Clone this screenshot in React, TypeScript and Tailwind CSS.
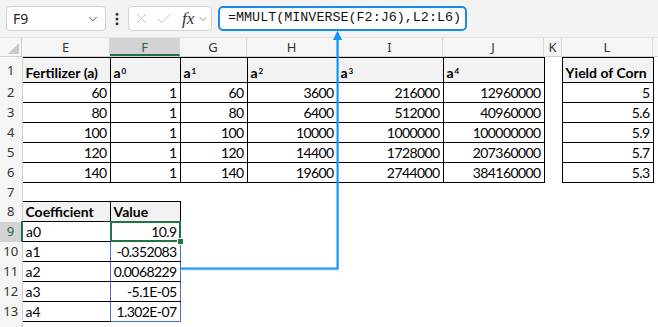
import React from "react";
import { ChevronDown, X, Check, EllipsisVertical } from "lucide-react";

const COLS = [
  { k: "E", w: 88 },
  { k: "F", w: 70 },
  { k: "G", w: 67 },
  { k: "H", w: 90 },
  { k: "I", w: 106 },
  { k: "J", w: 101 },
  { k: "K", w: 18 },
  { k: "L", w: 91 },
  { k: "", w: 80 },
];

const powers = [
  [60, 1, 60, 3600, 216000, 12960000, 5],
  [80, 1, 80, 6400, 512000, 40960000, 5.6],
  [100, 1, 100, 10000, 1000000, 100000000, 5.9],
  [120, 1, 120, 14400, 1728000, 207360000, 5.7],
  [140, 1, 140, 19600, 2744000, 384160000, 5.3],
];

const coeffs = [
  ["a0", "10.9"],
  ["a1", "-0.352083"],
  ["a2", "0.0068229"],
  ["a3", "-5.1E-05"],
  ["a4", "1.302E-07"],
];

const cellFont = { fontFamily: "Lato, 'Open Sans', sans-serif" };

function RowHead({ n, active }: { n?: number; active?: boolean }) {
  return (
    <td
      className={`p-0 text-center align-middle text-[13px] leading-none ${
        active
          ? "bg-[#d3d3d3] text-[#1e6b3f] border-r-2 border-r-[#217346]"
          : "bg-[#f5f5f5] text-[#333] border-r border-r-[#cfcfcf]"
      }`}
      style={{ fontFamily: "'Noto Sans', sans-serif" }}
    >
      {n}
    </td>
  );
}

function Cell({
  children,
  b,
  head,
  right,
  className = "",
}: {
  children?: React.ReactNode;
  b?: boolean;
  head?: boolean;
  right?: boolean;
  className?: string;
}) {
  return (
    <td
      className={`p-0 px-[3px] align-bottom pb-[1px] text-[14px] leading-[17px] text-black whitespace-nowrap overflow-hidden ${
        b ? "border border-black" : ""
      } ${head ? "bg-[#f2f2f2] font-bold" : ""} ${right ? "text-right tracking-[-0.6px]" : "text-left"} ${className}`}
      style={cellFont}
    >
      {children}
    </td>
  );
}

function Pow({ n }: { n: number }) {
  return (
    <>
      a<sup className="text-[8px] relative -top-[4px] ml-[1px] font-bold">{n}</sup>
    </>
  );
}

export default function App() {
  const total = 22 + COLS.reduce((s, c) => s + c.w, 0);
  return (
    <div className="relative w-[658px] h-[327px] overflow-hidden bg-white select-none">
      {/* formula bar */}
      <div className="h-[38px] bg-[#f3f3f3] border-b border-[#e2e2e2] flex items-start pt-[6px] pl-[6px]">
        <div className="w-[100px] h-[25px] bg-white border border-[#d4d4d4] rounded-[4px] flex items-center justify-between pl-[6px] pr-[5px]">
          <span className="text-[14px] text-[#222]" style={{ fontFamily: "'Noto Sans', sans-serif" }}>
            F9
          </span>
          <ChevronDown size={14} strokeWidth={1.5} className="text-[#444]" />
        </div>
        <div className="w-[22px] h-[25px] flex items-center justify-center">
          <EllipsisVertical size={16} strokeWidth={2.5} className="text-[#333]" />
        </div>
        <div className="w-[84px] h-[25px] bg-white border border-[#d4d4d4] rounded-[4px] flex items-center pl-[4px]">
          <X size={17} strokeWidth={1.1} className="text-[#b4b4b4]" />
          <Check size={18} strokeWidth={1.1} className="text-[#b4b4b4] ml-[5px]" />
          <span
            className="ml-[9px] text-[17px] italic text-[#333] leading-none"
            style={{ fontFamily: "'Liberation Serif', serif" }}
          >
            fx
          </span>
          <ChevronDown size={12} strokeWidth={1.5} className="text-[#777] ml-[3px]" />
        </div>
        <div className="ml-[6px] w-[249px] h-[25px] bg-white border-2 border-[#1a8ae6] rounded-[5px] flex items-center pl-[8px]">
          <span className="text-[13.4px] text-[#111]" style={{ fontFamily: "'Liberation Mono', monospace" }}>
            =MMULT(MINVERSE(F2:J6),L2:L6)
          </span>
        </div>
      </div>

      {/* column headers */}
      <div className="flex h-[19px] bg-[#f5f5f5] border-b border-[#cfcfcf]">
        <div className="w-[22px] shrink-0 relative border-r border-[#cfcfcf]">
          <div className="absolute right-[2px] bottom-[2px] w-0 h-0 border-l-[11px] border-l-transparent border-b-[11px] border-b-[#c8c8c8]" />
        </div>
        {COLS.map((c, i) => (
          <div
            key={i}
            style={{ width: c.w, fontFamily: "'Noto Sans', sans-serif" }}
            className={`shrink-0 text-center text-[13px] leading-[18px] border-r border-[#d8d8d8] ${
              c.k === "F" ? "bg-[#d3d3d3] text-[#1e6b3f] border-b-2 border-b-[#217346]" : "text-[#333]"
            }`}
          >
            {c.k}
          </div>
        ))}
      </div>

      {/* grid */}
      <table className="table-fixed border-collapse" style={{ width: total }}>
        <colgroup>
          <col style={{ width: 22 }} />
          {COLS.map((c, i) => (
            <col key={i} style={{ width: c.w }} />
          ))}
        </colgroup>
        <tbody>
          <tr className="h-[25px]">
            <RowHead n={1} />
            <Cell b head>Fertilizer (a)</Cell>
            {[0, 1, 2, 3, 4].map((n) => (
              <Cell key={n} b head>
                <Pow n={n} />
              </Cell>
            ))}
            <Cell />
            <Cell b head>Yield of Corn</Cell>
            <Cell />
          </tr>
          {powers.map((r, i) => (
            <tr key={i} className="h-[20px]">
              <RowHead n={i + 2} />
              {r.slice(0, 6).map((v, j) => (
                <Cell key={j} b right>
                  {v}
                </Cell>
              ))}
              <Cell />
              <Cell b right>
                {r[6]}
              </Cell>
              <Cell />
            </tr>
          ))}
          <tr className="h-[19px]">
            <RowHead n={7} />
            {COLS.map((c, i) => (
              <Cell key={i} />
            ))}
          </tr>
          <tr className="h-[20px]">
            <RowHead n={8} />
            <Cell b head>Coefficient</Cell>
            <Cell b head>Value</Cell>
            {COLS.slice(2).map((c, i) => (
              <Cell key={i} />
            ))}
          </tr>
          {coeffs.map(([k, v], i) => (
            <tr key={k} className="h-[20px]">
              <RowHead n={i + 9} active={i === 0} />
              <Cell b className={i > 0 ? "border-r-[#4a6fc0]" : ""}>
                {k}
              </Cell>
              {i === 0 ? (
                <td
                  className="relative p-0 px-[3px] align-bottom pb-[1px] text-right tracking-[-0.6px] text-[14px] leading-[17px] border border-black"
                  style={cellFont}
                >
                  {v}
                  <div className="absolute -inset-[1px] border-2 border-[#217346] pointer-events-none" />
                  <div className="absolute -right-[4px] -bottom-[4px] w-[7px] h-[7px] bg-[#217346] border border-white" />
                </td>
              ) : (
                <Cell
                  b
                  right
                  className={`border-l-[#4a6fc0] border-r-[#4a6fc0] ${i === 4 ? "border-b-[#4a6fc0]" : ""}`}
                >
                  {v}
                </Cell>
              )}
              {COLS.slice(2).map((c, j) => (
                <Cell key={j} />
              ))}
            </tr>
          ))}
          <tr className="h-[20px]">
            <RowHead />
            {COLS.map((c, i) => (
              <Cell key={i} />
            ))}
          </tr>
        </tbody>
      </table>

      {/* annotation arrow */}
      <svg className="absolute left-0 top-0 pointer-events-none" width={658} height={327}>
        <path d="M182 270 H338.5 V40" fill="none" stroke="#9a9a9a" strokeOpacity={0.5} strokeWidth={1} />
        <path d="M181 268.5 H337.5 V38" fill="none" stroke="#0a98ff" strokeWidth={2} />
        <polygon points="337.5,30.5 333,40 342,40" fill="#0a98ff" />
      </svg>
    </div>
  );
}
